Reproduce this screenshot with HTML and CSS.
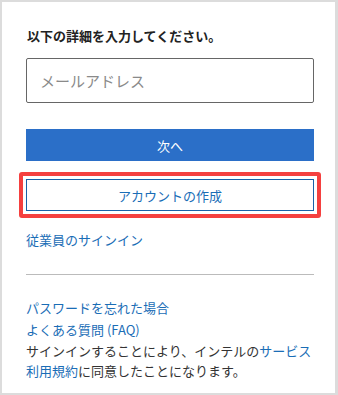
FILE: index.html
```html
<!DOCTYPE html>
<html lang="ja">
<head>
    <meta charset="UTF-8">
    <meta name="viewport" content="width=device-width, initial-scale=1.0">
    <title>サインイン</title>
    <link rel="stylesheet" href="styles.css">
</head>
<body>
    <div class="card">
        <h1 class="title">以下の詳細を入力してください。</h1>

        <!-- Email field -->
        <input type="text" class="email" placeholder="メールアドレス">

        <button class="next-btn">次へ</button>

        <!-- Highlighted create account button -->
        <div class="highlight">
            <button class="create-btn">アカウントの作成</button>
        </div>

        <a href="#" class="link employee">従業員のサインイン</a>

        <hr class="divider">

        <a href="#" class="link footer-link">パスワードを忘れた場合</a>
        <a href="#" class="link footer-link">よくある質問 (FAQ)</a>
        <p class="terms">サインインすることにより、インテルの<a href="#" class="inline-link">サービス利用規約</a>に同意したことになります。</p>
    </div>
</body>
</html>
```
FILE: styles.css
```css
/* General Styles */
body {
    margin: 0;
    background-color: #dcdcdc;
    font-family: "Noto Sans CJK JP", "Noto Sans", sans-serif;
    font-size: 13px;
    color: #333;
}

.card {
    background-color: white;
    margin: 2px 3px 2px 2px;
    height: 391px;
    box-sizing: border-box;
    padding: 25px 21px 0 24px;
}

.title {
    font-size: 13px;
    font-weight: bold;
    line-height: 18px;
    margin: 0 0 13px 1px;
    color: #222;
}

/* Input and Button Styling */
.email {
    display: block;
    width: 288px;
    height: 45px;
    box-sizing: border-box;
    border: 1px solid #666;
    border-radius: 2px;
    padding: 0 13px;
    font-family: inherit;
    font-size: 15px;
    color: #333;
}

.email::placeholder {
    color: #8a8a8a;
}

.next-btn {
    display: block;
    width: 288px;
    height: 32px;
    margin-top: 26px;
    border: none;
    background-color: #2b6fc8;
    color: white;
    font-family: inherit;
    font-size: 13px;
    cursor: pointer;
}

.highlight {
    width: 288px;
    margin: 11px 0 0 -7px;
    padding: 3px;
    border: 4px solid #f5403f;
    border-radius: 3px;
}

.create-btn {
    display: block;
    width: 288px;
    height: 32px;
    box-sizing: border-box;
    border: 1px solid #1a62a8;
    background-color: white;
    color: #1a6db6;
    font-family: inherit;
    font-size: 13px;
    cursor: pointer;
}

/* Links */
.link {
    display: block;
    color: #1a6db6;
    text-decoration: none;
}

.employee {
    margin-top: 13px;
    line-height: 18px;
}

.divider {
    border: none;
    border-top: 1px solid #bbb;
    margin: 25px 0 22px 0;
}

.footer-link {
    line-height: 22px;
}

.terms {
    margin: 0;
    line-height: 20px;
}

.inline-link {
    color: #1a6db6;
    text-decoration: none;
}
```
